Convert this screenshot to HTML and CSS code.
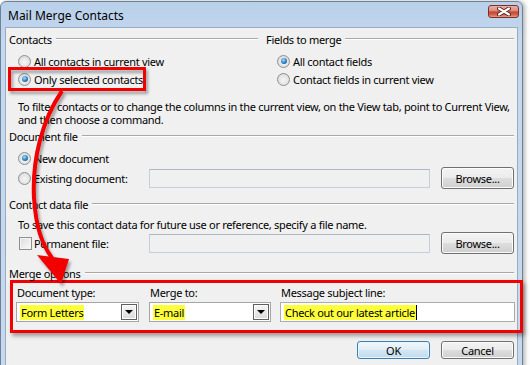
FILE: index.html
```html
<!DOCTYPE html>
<html>

<head>
  <link rel="stylesheet" href="styles.css">
  <title>Mail Merge Contacts</title>
</head>
<body>
  <div class="window">
    <div class="titlebar">
      <span class="title">Mail Merge Contacts</span>
      <div class="close">
        <svg width="14" height="9" viewBox="0 0 14 9">
          <path d="M2 1.5 L12 7.5 M12 1.5 L2 7.5" stroke="#5a2018" stroke-width="4" stroke-linecap="round" fill="none"/>
          <path d="M2 1.5 L12 7.5 M12 1.5 L2 7.5" stroke="#fff" stroke-width="2.2" stroke-linecap="round" fill="none"/>
        </svg>
      </div>
    </div>
    <div class="client">
      <div class="columns">
        <div class="col col-left">
          <div class="group-head"><span>Contacts</span><span class="rule"></span></div>
          <div class="opt"><span class="radio"></span>All contacts in current view</div>
          <div class="opt"><span class="radio checked"></span>Only selected contacts</div>
        </div>
        <div class="col col-right">
          <div class="group-head"><span>Fields to merge</span><span class="rule"></span></div>
          <div class="opt"><span class="radio checked"></span>All contact fields</div>
          <div class="opt"><span class="radio"></span>Contact fields in current view</div>
        </div>
      </div>
      <div class="help">
        <p>To filter contacts or to change the columns in the current view, on the View tab, point to Current View,</p>
        <p>and then choose a command.</p>
      </div>

      <!-- Document file -->
      <div class="group-head doc-head"><span>Document file</span><span class="rule"></span></div>
      <div class="opt new-doc"><span class="radio checked"></span>New document</div>
      <div class="file-row">
        <div class="opt row-label"><span class="radio"></span>Existing document:</div>
        <div class="textbox"></div>
        <button class="btn">Browse...</button>
      </div>

      <!-- Contact data file -->
      <div class="group-head data-head"><span>Contact data file</span><span class="rule"></span></div>
      <p class="save-text">To save this contact data for future use or reference, specify a file name.</p>
      <div class="file-row perm-row">
        <div class="opt row-label"><span class="check"></span>Permanent file:</div>
        <div class="textbox"></div>
        <button class="btn">Browse...</button>
      </div>

      <!-- Merge options -->
      <div class="group-head merge-head"><span>Merge options</span><span class="rule"></span></div>
      <div class="merge-box">
        <div class="field f-type">
          <div class="field-label">Document type:</div>
          <div class="combo"><span class="hl">Form Letters</span><span class="drop"></span></div>
        </div>
        <div class="field f-to">
          <div class="field-label">Merge to:</div>
          <div class="combo"><span class="hl">E-mail</span><span class="drop"></span></div>
        </div>
        <div class="field f-subject">
          <div class="field-label">Message subject line:</div>
          <div class="subject"><span class="hl">Check out our latest article</span><span class="caret"></span></div>
        </div>
      </div>

      <div class="buttons">
        <button class="btn ok">OK</button>
        <button class="btn">Cancel</button>
      </div>
    </div>
  </div>

  <!-- annotation drawn over the dialog -->
  <svg class="overlay" width="530" height="365" viewBox="0 0 530 365">
    <defs>
      <filter id="shadow" x="-20%" y="-20%" width="140%" height="140%">
        <feDropShadow dx="2" dy="3" stdDeviation="1.5" flood-color="#000" flood-opacity="0.35"/>
      </filter>
    </defs>
    <g filter="url(#shadow)">
      <rect x="9.5" y="68.5" width="135" height="21" fill="none" stroke="#f20000" stroke-width="3"/>
      <path d="M62 91 C42 120 32 160 34 198 C36 228 42 244 52 258" fill="none" stroke="#f20000" stroke-width="4"/>
      <polygon points="37,255 69,259 61,284" fill="#f20000"/>
    </g>
  </svg>
</body>

</html>
```

FILE: styles.css
```css
body {
  margin: 0;
  background-color: #fff;
  font-family: "Noto Sans", "Open Sans", sans-serif;
  font-size: 11px;
  letter-spacing: -0.3px;
  color: #000;
  overflow: hidden;
}

p {
  margin: 0;
  white-space: nowrap;
}

.window {
  width: 523px;
  height: 380px;
  margin-top: 1px;
  box-sizing: border-box;
  border: 1px solid #6f8196;
  border-radius: 6px 6px 0 0;
  background: linear-gradient(#b9d0ea, #c4d8ee 40px, #c6d9ee);
  box-shadow: 2px 0 4px rgba(0, 0, 0, 0.3);
}

.titlebar {
  height: 25px;
  display: flex;
  justify-content: space-between;
  align-items: flex-start;
}

.title {
  font-size: 12px;
  letter-spacing: 0;
  padding-left: 7px;
  margin-top: 5px;
}

.close {
  width: 31px;
  height: 13px;
  margin-top: 3px;
  margin-right: 3px;
  box-sizing: border-box;
  border: 1px solid #7e3128;
  border-radius: 3px;
  background: linear-gradient(#eab0a6 0, #dc8b7f 45%, #c44a36 52%, #cc5b48 75%, #e39a8a 100%);
  display: flex;
  align-items: center;
  justify-content: center;
}

.client {
  margin: 0 4px;
  height: 400px;
  border: 1px solid #97abc2;
  background-color: #f0f0f0;
  padding: 3px 3px 0 3px;
}

.columns {
  display: flex;
}

.col-left {
  width: 249px;
  padding-right: 8px;
}

.col-right {
  flex: 1;
}

.group-head {
  display: flex;
  align-items: center;
  height: 16px;
  gap: 4px;
}

.rule {
  flex: 1;
  height: 0;
  border-top: 1px solid #a8a8a8;
  border-bottom: 1px solid #fff;
}

.opt {
  display: flex;
  align-items: center;
  height: 18px;
  padding-left: 9px;
  white-space: nowrap;
}

.group-head + .opt {
  margin-top: 5px;
}

.col-right .opt {
  padding-left: 11px;
}

.radio {
  flex: none;
  width: 13px;
  height: 13px;
  box-sizing: border-box;
  border: 1px solid #8e8f8f;
  border-radius: 50%;
  background: radial-gradient(circle at 50% 55%, #f6f6f6 0, #e4e4e4 55%, #cfcfcf 100%);
  margin-right: 3px;
  display: flex;
  align-items: center;
  justify-content: center;
}

.radio.checked::after {
  content: "";
  width: 6px;
  height: 6px;
  border-radius: 50%;
  background: radial-gradient(circle at 40% 35%, #a6dcfa 0, #2a7fc0 55%, #123f6a 100%);
}

.check {
  flex: none;
  width: 13px;
  height: 13px;
  box-sizing: border-box;
  border: 1px solid #8e8f8f;
  background: linear-gradient(135deg, #dcdcdc, #fbfbfb);
  box-shadow: inset 0 0 0 1px #f4f4f4;
  margin-left: 1px;
  margin-right: 2px;
}

.help {
  margin-top: 12px;
  padding-left: 9px;
}

.help p {
  height: 13px;
  line-height: 13px;
}

.doc-head {
  margin-top: 2px;
}

.new-doc {
  margin-top: 4px;
}

.file-row {
  display: flex;
  align-items: center;
  height: 22px;
}

.row-label {
  width: 131px;
}

.textbox {
  width: 281px;
  height: 19px;
  box-sizing: border-box;
  border: 1px solid #c3cfdc;
  border-top-color: #a9b6c6;
  background-color: #f0f0f0;
  margin-right: 11px;
}

.btn {
  width: 73px;
  height: 22px;
  border: 1px solid #707070;
  border-radius: 3px;
  background: linear-gradient(#f3f3f3 0, #ebebeb 48%, #dddddd 52%, #cfcfcf 100%);
  box-shadow: inset 0 0 0 1px #fbfbfb;
  font-family: inherit;
  font-size: 11px;
  letter-spacing: -0.3px;
  color: #000;
  padding: 0;
}

.data-head {
  margin-top: 7px;
}

.save-text {
  margin-top: 6px;
  padding-left: 9px;
  line-height: 14px;
}

.merge-head {
  margin-top: 11px;
}

.merge-box {
  display: flex;
  gap: 10px;
  margin-top: -1px;
  margin-left: 1px;
  margin-right: -9px;
  border: 3px solid #f20000;
  padding: 2px 5px 8px 3px;
  box-shadow: 2px 3px 4px rgba(0, 0, 0, 0.35);
}

.f-type {
  width: 123px;
}

.f-to {
  width: 122px;
  margin-right: -1px;
}

.f-subject {
  width: 235px;
}

.field-label {
  height: 16px;
  line-height: 16px;
  padding-left: 1px;
  margin-bottom: 1px;
}

.combo {
  height: 20px;
  box-sizing: border-box;
  border: 1px solid #a5a5a5;
  background-color: #fff;
  display: flex;
  align-items: center;
  justify-content: space-between;
  padding-left: 3px;
}

.hl {
  background-color: #ffff3a;
  line-height: 15px;
  padding: 0 1px;
}

.drop {
  width: 16px;
  height: 16px;
  box-sizing: border-box;
  margin-right: 1px;
  border: 1px solid #5f5f5f;
  background: linear-gradient(#f7f7f7, #dadada);
  box-shadow: inset 0 0 0 1px #fff;
  display: flex;
  align-items: center;
  justify-content: center;
}

.drop::after {
  content: "";
  border-left: 4px solid transparent;
  border-right: 4px solid transparent;
  border-top: 4px solid #000;
}

.subject {
  height: 20px;
  box-sizing: border-box;
  border: 1px solid #acacac;
  background-color: #fff;
  display: flex;
  align-items: center;
  padding-left: 3px;
}

.caret {
  width: 1px;
  height: 15px;
  background-color: #000;
}

.buttons {
  display: flex;
  justify-content: flex-end;
  gap: 11px;
  margin-top: 8px;
}

.buttons .btn {
  height: 18px;
}

.ok {
  border-color: #3c7fb1;
  background: linear-gradient(#eef6fb 0, #e2eef7 48%, #d2e5f2 52%, #c2dbee 100%);
  box-shadow: inset 0 0 0 1px #e8f6fd;
}

.overlay {
  position: absolute;
  top: 0;
  left: 0;
  pointer-events: none;
}
```
